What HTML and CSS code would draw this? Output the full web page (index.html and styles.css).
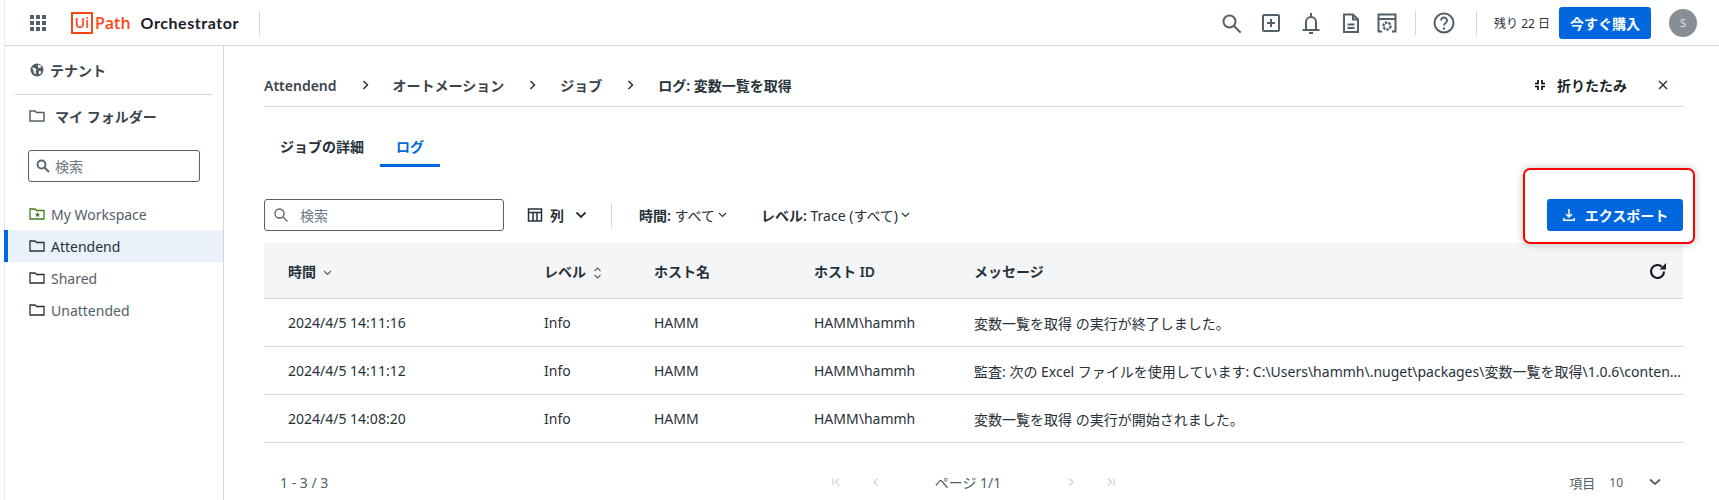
FILE: index.html
```html
<!DOCTYPE html>
<html lang="ja">
<head>
    <meta charset="UTF-8">
    <title>UiPath Orchestrator</title>
    <link rel="stylesheet" href="styles.css">
</head>
<body>
    <div class="app">
        <header class="topbar">
            <svg class="apps" width="16" height="16" viewBox="0 0 16 16" fill="#526069">
                <rect x="0" y="0" width="4" height="4"/><rect x="6" y="0" width="4" height="4"/><rect x="12" y="0" width="4" height="4"/>
                <rect x="0" y="6" width="4" height="4"/><rect x="6" y="6" width="4" height="4"/><rect x="12" y="6" width="4" height="4"/>
                <rect x="0" y="12" width="4" height="4"/><rect x="6" y="12" width="4" height="4"/><rect x="12" y="12" width="4" height="4"/>
            </svg>
            <div class="logo"><span class="logo-ui">Ui</span><span class="logo-path">Path</span></div>
            <div class="product">Orchestrator</div>
            <div class="vline head-line"></div>
            <div class="topbar-right">
                <svg class="ticon" width="24" height="24" viewBox="0 0 24 24" fill="none" stroke="#526069" stroke-width="2"><circle cx="10.5" cy="10.5" r="6"/><path d="M15 15l6 6" stroke-linecap="round"/></svg>
                <svg class="ticon" width="24" height="24" viewBox="0 0 24 24" fill="none" stroke="#526069" stroke-width="2"><rect x="4" y="4" width="16" height="16" rx="1"/><path d="M12 8v8M8 12h8"/></svg>
                <svg class="ticon" width="24" height="24" viewBox="0 0 24 24" fill="none" stroke="#526069" stroke-width="2"><path d="M7 19v-8a5 5 0 0 1 10 0v8"/><path d="M3.500 19h17"/><path d="M12 2v4"/><path d="M10 22h4"/></svg>
                <svg class="ticon" width="24" height="24" viewBox="0 0 24 24" fill="none" stroke="#526069" stroke-width="2"><path d="M5 3.500h9l5 5v12.500H5z"/><path d="M14 3.500v5h5"/><path d="M8.500 13.500h7M8.500 17h7"/></svg>
                <svg class="ticon cal" width="24" height="24" viewBox="0 0 24 24" fill="none" stroke="#526069" stroke-width="2"><path d="M7 20.500H3.500v-17h17v17H17"/><path d="M3.500 8h17"/><circle cx="12" cy="15" r="3.500" stroke-width="2.500" stroke-dasharray="2.500 1"/></svg>
                <div class="vline line-a"></div>
                <svg class="ticon help" width="24" height="24" viewBox="0 0 24 24" fill="none" stroke="#526069" stroke-width="2"><circle cx="12" cy="12" r="9.500"/><path d="M9 9.500a3 3 0 1 1 4.600 2.500c-1 .7-1.600 1.200-1.600 2.500"/><circle cx="12" cy="17.500" r="1.200" fill="#526069" stroke="none"/></svg>
                <div class="vline line-b"></div>
                <span class="trial">残り 22 日</span>
                <button class="buy">今すぐ購入</button>
                <div class="avatar">S</div>
            </div>
        </header>

        <div class="main">
            <nav class="sidebar">
                <div class="side-title side-tenant">
                    <svg width="16" height="16" viewBox="0 0 16 16"><circle cx="8" cy="8" r="6.500" fill="#526069"/><path d="M3 5.500l3 .5 1.500 2-1 1.500.5 3-2-1.500-.5-2.500zM9 2.500l3.500 1.500-1.500 2-2-.5zM10 9l2.500.5L11 12.500 9.500 11z" fill="#fff"/></svg>
                    <span>テナント</span>
                </div>
                <div class="side-sep"></div>
                <div class="side-title side-folder">
                    <svg width="16" height="16" viewBox="0 0 16 16" fill="none" stroke="#526069" stroke-width="1.500"><path d="M1 3h5l1.500 1.500H15V13H1z"/></svg>
                    <span>マイ フォルダー</span>
                </div>
                <div class="side-search">
                    <svg width="16" height="16" viewBox="0 0 16 16" fill="none" stroke="#526069" stroke-width="1.800"><circle cx="6.500" cy="6.500" r="4"/><path d="M9.500 9.500l4.500 4.500"/></svg>
                    <span>検索</span>
                </div>
                <ul class="folders">
                    <li>
                        <svg width="16" height="16" viewBox="0 0 16 16" fill="none" stroke="#3f7d20" stroke-width="1.300"><path d="M1 3h5l1.500 1.500H15V13H1z"/><path d="M8.500 6l.8 1.700 1.800.2-1.300 1.200.4 1.800-1.700-.9-1.700.9.400-1.800-1.300-1.200 1.800-.2z" fill="#3f7d20" stroke="none"/></svg>
                        My Workspace
                    </li>
                    <li class="active">
                        <svg width="16" height="16" viewBox="0 0 16 16" fill="none" stroke="#273139" stroke-width="1.300"><path d="M1 3h5l1.500 1.500H15V13H1z"/></svg>
                        Attendend
                    </li>
                    <li>
                        <svg width="16" height="16" viewBox="0 0 16 16" fill="none" stroke="#273139" stroke-width="1.300"><path d="M1 3h5l1.500 1.500H15V13H1z"/></svg>
                        Shared
                    </li>
                    <li>
                        <svg width="16" height="16" viewBox="0 0 16 16" fill="none" stroke="#273139" stroke-width="1.300"><path d="M1 3h5l1.500 1.500H15V13H1z"/></svg>
                        Unattended
                    </li>
                </ul>
            </nav>

            <section class="content">
                <div class="crumbs">
                    <span>Attendend</span>
                    <svg class="sep" width="8" height="10" viewBox="0 0 8 10" fill="none" stroke="#273139" stroke-width="1.500"><path d="M1.500 1l4 4-4 4"/></svg>
                    <span>オートメーション</span>
                    <svg class="sep" width="8" height="10" viewBox="0 0 8 10" fill="none" stroke="#273139" stroke-width="1.500"><path d="M1.500 1l4 4-4 4"/></svg>
                    <span>ジョブ</span>
                    <svg class="sep" width="8" height="10" viewBox="0 0 8 10" fill="none" stroke="#273139" stroke-width="1.500"><path d="M1.500 1l4 4-4 4"/></svg>
                    <span class="crumb-last">ログ: 変数一覧を取得</span>
                    <div class="crumb-actions">
                        <svg width="12" height="12" viewBox="0 0 12 12" fill="none" stroke="#000" stroke-width="1.600"><path d="M4 1v3.500H1M8 1v3.500H11M4 11V7.500H1M8 11V7.500H11"/></svg>
                        <span class="collapse">折りたたみ</span>
                        <svg class="close" width="10" height="10" viewBox="0 0 10 10" fill="none" stroke="#273139" stroke-width="1.400"><path d="M1 1l8 8M9 1l-8 8"/></svg>
                    </div>
                </div>

                <div class="tabs">
                    <div class="tab">ジョブの詳細</div>
                    <div class="tab selected">ログ</div>
                </div>

                <div class="toolbar">
                    <div class="search">
                        <svg width="16" height="16" viewBox="0 0 16 16" fill="none" stroke="#526069" stroke-width="1.300"><circle cx="6.500" cy="6.500" r="4.500"/><path d="M10 10l4.500 4.500"/></svg>
                        <span>検索</span>
                    </div>
                    <div class="columns">
                        <svg width="16" height="16" viewBox="0 0 16 16" fill="none" stroke="#273139" stroke-width="1.500"><rect x="1.500" y="2" width="13" height="12"/><path d="M1.500 5.500h13M6 5.500V14M10 5.500V14"/></svg>
                        <span>列</span>
                        <svg width="12" height="8" viewBox="0 0 12 8" fill="none" stroke="#273139" stroke-width="1.800"><path d="M1.500 1.500L6 6l4.500-4.500"/></svg>
                    </div>
                    <div class="vline tool-line"></div>
                    <div class="filter">
                        <span><b>時間:</b> すべて</span>
                        <svg width="9" height="6" viewBox="0 0 9 6" fill="none" stroke="#273139" stroke-width="1.100"><path d="M1 1l3.500 3.500L8 1"/></svg>
                    </div>
                    <div class="filter">
                        <span><b>レベル:</b> Trace (すべて)</span>
                        <svg width="9" height="6" viewBox="0 0 9 6" fill="none" stroke="#273139" stroke-width="1.100"><path d="M1 1l3.500 3.500L8 1"/></svg>
                    </div>
                    <button class="export">
                        <svg width="14" height="14" viewBox="0 0 14 14" fill="none" stroke="#fff" stroke-width="1.500"><path d="M7 1v7.500M4 6l3 3 3-3"/><path d="M1.800 10v2.200h10.400V10"/></svg>
                        エクスポート
                    </button>
                </div>

                <div class="row head">
                    <div>時間 <svg class="sort" width="9" height="6" viewBox="0 0 9 6" fill="none" stroke="#526069" stroke-width="1.200"><path d="M1 1l3.500 3.500L8 1"/></svg></div>
                    <div>レベル <svg class="sort" width="9" height="12" viewBox="0 0 9 12" fill="none" stroke="#526069" stroke-width="1.100"><path d="M1.500 4L4.500 1l3 3M1.500 8l3 3 3-3"/></svg></div>
                    <div>ホスト名</div>
                    <div>ホスト ID</div>
                    <div>メッセージ</div>
                    <svg class="refresh" width="18" height="18" viewBox="0 0 18 18" fill="none" stroke="#1a1f24" stroke-width="2.200"><path d="M15 9.500a6.500 6.500 0 1 1-2-4.700"/><path d="M17 1v6.500h-6.500z" fill="#1a1f24" stroke="none"/></svg>
                </div>
                <div class="row">
                    <div>2024/4/5 14:11:16</div><div>Info</div><div>HAMM</div><div>HAMM\hammh</div>
                    <div>変数一覧を取得 の実行が終了しました。</div>
                </div>
                <div class="row">
                    <div>2024/4/5 14:11:12</div><div>Info</div><div>HAMM</div><div>HAMM\hammh</div>
                    <div class="msg">監査: 次の Excel ファイルを使用しています: C:\Users\hammh\.nuget\packages\変数一覧を取得\1.0.6\conten...</div>
                </div>
                <div class="row">
                    <div>2024/4/5 14:08:20</div><div>Info</div><div>HAMM</div><div>HAMM\hammh</div>
                    <div>変数一覧を取得 の実行が開始されました。</div>
                </div>

                <div class="pager">
                    <div class="pager-count">1 - 3 / 3</div>
                    <div class="pager-nav">
                        <svg width="10" height="10" viewBox="0 0 10 10" fill="none" stroke="#c8ced3" stroke-width="1.100"><path d="M2 1.500v7M8 1.500L4.500 5 8 8.500"/></svg>
                        <svg width="10" height="10" viewBox="0 0 10 10" fill="none" stroke="#c8ced3" stroke-width="1.100"><path d="M6.500 1.500L3 5l3.500 3.500"/></svg>
                        <span class="pn-text">ページ 1/1</span>
                        <svg width="10" height="10" viewBox="0 0 10 10" fill="none" stroke="#c8ced3" stroke-width="1.100"><path d="M3.500 1.500L7 5 3.500 8.500"/></svg>
                        <svg width="10" height="10" viewBox="0 0 10 10" fill="none" stroke="#c8ced3" stroke-width="1.100"><path d="M8 1.500v7M2 1.500L5.500 5 2 8.500"/></svg>
                    </div>
                    <div class="pager-size">
                        <span>項目</span><span class="size-num">10</span>
                        <svg width="12" height="8" viewBox="0 0 12 8" fill="none" stroke="#526069" stroke-width="1.800"><path d="M1 1.500L6 6l5-4.500"/></svg>
                    </div>
                </div>

                <div class="callout"></div>
            </section>
        </div>
    </div>
</body>
</html>
```

FILE: styles.css
```css
* {
    box-sizing: border-box;
}

html, body {
    margin: 0;
    padding: 0;
    height: 500px;
    overflow: hidden;
    background-color: #fff;
}

body {
    font-family: "Noto Sans", "Noto Sans CJK JP", sans-serif;
    font-size: 14px;
    color: #273139;
}

svg {
    flex: none;
}

.app {
    margin-left: 4px;
    border-left: 1px solid #eceff1;
    height: 500px;
    display: flex;
    flex-direction: column;
}

.vline {
    width: 1px;
    height: 24px;
    background-color: #cfd8dd;
}

/* top bar */
.topbar {
    height: 46px;
    flex: none;
    display: flex;
    align-items: center;
    border-bottom: 1px solid #cfd8dd;
    padding-left: 25px;
}

.logo {
    display: flex;
    align-items: center;
    margin-left: 25px;
    font-family: "Open Sans", sans-serif;
    color: #fa4616;
    font-size: 16px;
    font-weight: 600;
}

.logo-ui {
    width: 22px;
    height: 22px;
    border: 2px solid #fa4616;
    display: flex;
    align-items: center;
    justify-content: center;
    font-size: 14px;
    margin-right: 2px;
}

.product {
    font-family: "Lato", sans-serif;
    font-weight: 700;
    font-size: 16px;
    color: #182027;
    margin-left: 10px;
    letter-spacing: 0.55px;
}

.head-line {
    margin-left: 20px;
}

.topbar-right {
    margin-left: auto;
    display: flex;
    align-items: center;
    padding-right: 22px;
}

.ticon {
    margin-left: 16px;
}

.ticon.cal {
    margin-left: 12px;
}

.line-a {
    margin-left: 16px;
}

.line-b {
    margin-left: 20px;
}

.trial {
    font-size: 12px;
    margin-left: 17px;
}

.buy {
    height: 32px;
    width: 92px;
    margin-left: 9px;
    border: none;
    border-radius: 3px;
    background-color: #0067df;
    color: #fff;
    font-family: inherit;
    font-size: 14px;
    font-weight: 600;
    padding: 0;
}

.avatar {
    width: 28px;
    height: 28px;
    margin-left: 18px;
    border-radius: 50%;
    background-color: #858f95;
    color: #e6e9eb;
    font-size: 11px;
    display: flex;
    align-items: center;
    justify-content: center;
}

.main {
    flex: 1;
    display: flex;
    min-height: 0;
}

/* left side */
.sidebar {
    width: 219px;
    flex: none;
    border-right: 1px solid #cfd8dd;
}

.side-title {
    display: flex;
    align-items: center;
    font-weight: 600;
    padding-left: 24px;
    color: #3a444c;
}

.side-tenant {
    height: 48px;
    gap: 5px;
}

.side-folder {
    height: 44px;
    padding-bottom: 2px;
    gap: 10px;
}

.side-sep {
    height: 1px;
    background-color: #cfd8dd;
    margin: 0 10px;
}

.side-search {
    height: 32px;
    margin: 11px 23px 0 23px;
    border: 1px solid #526069;
    border-radius: 3px;
    display: flex;
    align-items: center;
    gap: 4px;
    padding-left: 6px;
    color: #6b7882;
}

.folders {
    list-style: none;
    margin: 16px 0 0;
    padding: 0;
}

.folders li {
    height: 32px;
    display: flex;
    align-items: center;
    gap: 6px;
    padding-left: 24px;
    color: #526069;
}

.folders li.active {
    background-color: #e9f1fa;
    border-left: 4px solid #0067df;
    margin-left: -1px;
    padding-left: 21px;
    color: #273139;
}

/* content */
.content {
    position: relative;
    flex: 1;
    padding: 0 36px 0 40px;
    min-width: 0;
}

.crumbs {
    height: 61px;
    display: flex;
    align-items: center;
    padding-top: 18px;
    border-bottom: 1px solid #cfd8dd;
    font-weight: 600;
    color: #3a444c;
}

.crumbs .sep {
    margin: 0 23px 0 25px;
}

.crumb-last {
    color: #273139;
}

.crumb-actions {
    margin-left: auto;
    display: flex;
    align-items: center;
    padding-right: 15px;
}

.collapse {
    color: #1a1f24;
    margin-left: 11px;
}

.close {
    margin-left: 31px;
}

.tabs {
    display: flex;
    margin-top: 22px;
    padding-left: 16px;
}

.tab {
    height: 38px;
    font-weight: 600;
    padding-top: 7px;
    color: #273139;
}

.tab.selected {
    color: #0067df;
    width: 60px;
    margin-left: 16px;
    text-align: center;
    border-bottom: 3px solid #0067df;
}

.toolbar {
    display: flex;
    align-items: center;
    height: 32px;
    margin-top: 32px;
}

.search {
    width: 240px;
    height: 32px;
    border: 1px solid #526069;
    border-radius: 3px;
    display: flex;
    align-items: center;
    gap: 11px;
    padding-left: 8px;
    color: #6b7882;
}

.columns {
    display: flex;
    align-items: center;
    margin-left: 23px;
    font-weight: 600;
}

.columns span {
    margin: 0 11px 0 7px;
}

.tool-line {
    margin-left: 24px;
}

.filter {
    display: flex;
    align-items: center;
    gap: 3px;
    margin-left: 27px;
    white-space: pre;
}

.filter b {
    font-weight: 600;
}

.filter + .filter {
    margin-left: 34px;
}

.export {
    margin-left: auto;
    width: 136px;
    height: 32px;
    border: none;
    border-radius: 3px;
    background-color: #0067df;
    color: #fff;
    font-family: inherit;
    font-size: 14px;
    font-weight: 600;
    display: flex;
    align-items: center;
    justify-content: center;
    gap: 9px;
    padding: 0;
}

.row {
    position: relative;
    display: grid;
    grid-template-columns: 256px 110px 160px 160px 1fr;
    align-items: center;
    height: 48px;
    padding-left: 24px;
    border-bottom: 1px solid #cfd8dd;
    color: #273139;
}

.row div {
    min-width: 0;
}

.row.head {
    height: 56px;
    margin-top: 12px;
    background-color: #f4f5f7;
    font-weight: 600;
}

.sort {
    margin-left: 3px;
    vertical-align: middle;
}

.refresh {
    position: absolute;
    right: 16px;
    top: 19px;
}

.msg {
    white-space: nowrap;
}

.pager {
    display: grid;
    grid-template-columns: 1fr auto 1fr;
    align-items: center;
    height: 78px;
    padding: 0 16px;
    color: #526069;
}

.pager-nav {
    display: flex;
    align-items: center;
    gap: 30px;
}

.pn-text {
    margin: 0 35px 0 24px;
    color: #526069;
}

.pager-size {
    display: flex;
    align-items: center;
    justify-content: flex-end;
    font-size: 13px;
}

.size-num {
    font-size: 12px;
    margin: 0 26px 0 14px;
}

.pager-size svg {
    margin-right: 6px;
}

.callout {
    position: absolute;
    left: 1299px;
    top: 122px;
    width: 172px;
    height: 76px;
    border: 2px solid #f00;
    border-radius: 7px;
    box-shadow: 0 0 8px rgba(0, 0, 0, 0.25);
}
```
